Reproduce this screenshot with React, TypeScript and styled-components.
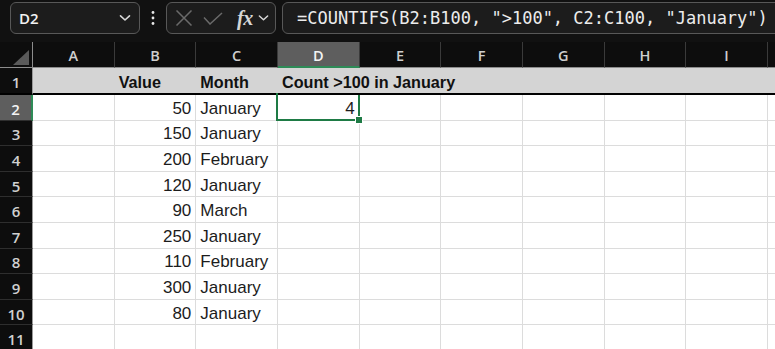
import React from 'react';
import styled, { createGlobalStyle, css } from 'styled-components';

const GlobalStyle = createGlobalStyle`
  html, body { margin: 0; padding: 0; background: #ffffff; }
  body { font-family: "Liberation Sans", Arial, sans-serif; }
  #root { width: 775px; height: 349px; }
`;

const Frame = styled.div`
  width: 775px;
  height: 349px;
  overflow: hidden;
  background: #ffffff;
  display: flex;
  flex-direction: column;
`;

const Toolbar = styled.div`
  flex: none;
  height: 42px;
  box-sizing: border-box;
  background: #111111;
  display: flex;
  align-items: flex-start;
  padding: 2px 0 0 10px;
`;

const Box = styled.div<{ $width?: number; $grow?: boolean }>`
  box-sizing: border-box;
  height: 32px;
  border: 1px solid #585858;
  border-radius: 6px;
  background: #1c1c1c;
  display: flex;
  align-items: center;
  ${(p) => (p.$width ? `width: ${p.$width}px; flex: none;` : '')}
  ${(p) => (p.$grow ? 'flex: 1; margin-right: -12px;' : '')}
`;

const NameText = styled.span`
  flex: 1;
  padding-left: 8px;
  color: #f2f2f2;
  font-family: "Open Sans", "Noto Sans", sans-serif;
  font-weight: 600;
  font-size: 15px;
`;

const IconSlot = styled.span<{ $ml?: number; $mr?: number }>`
  display: inline-flex;
  align-items: center;
  margin-left: ${(p) => p.$ml ?? 0}px;
  margin-right: ${(p) => p.$mr ?? 0}px;
`;

const DotsWrap = styled.div`
  width: 26px;
  height: 32px;
  flex: none;
  display: flex;
  align-items: center;
  justify-content: center;
`;

const FormulaText = styled.span`
  padding-left: 14px;
  color: #ececec;
  font-family: "DejaVu Sans Mono", "Liberation Mono", monospace;
  font-size: 17px;
  white-space: nowrap;
`;

const Sheet = styled.div`
  flex: 1;
  display: grid;
  grid-template-columns: 33px repeat(9, 81.67px) 1fr;
  grid-template-rows: 26px 27px repeat(10, 25.6px);
  overflow: hidden;
`;

const ColHead = styled.div<{ $active?: boolean }>`
  box-sizing: border-box;
  background: #0d0d0d;
  color: #cfcfcf;
  border-right: 1px solid #3a3a3a;
  border-bottom: 1px solid #8c8c8c;
  display: flex;
  align-items: center;
  justify-content: center;
  padding-top: 2px;
  font-family: "Open Sans", "Noto Sans", sans-serif;
  font-weight: 600;
  font-size: 14.5px;
  ${(p) =>
    p.$active &&
    css`
      background: #5e5e5e;
      color: #f4f4f4;
      border-bottom: 2px solid #2e8b57;
    `}
`;

const Corner = styled.div`
  box-sizing: border-box;
  background: #0d0d0d;
  border-right: 1px solid #8c8c8c;
  border-bottom: 1px solid #8c8c8c;
  display: flex;
  align-items: flex-end;
  justify-content: flex-end;
  padding: 0 3px 2px 0;
`;

const RowHead = styled.div<{ $active?: boolean; $thick?: boolean }>`
  box-sizing: border-box;
  background: #0d0d0d;
  color: #d0d0d0;
  border-right: 1px solid #9a9a9a;
  border-bottom: ${(p) => (p.$thick ? '2px solid #000' : '1px solid #2e2e2e')};
  display: flex;
  align-items: center;
  justify-content: center;
  padding-top: 3px;
  font-family: "Open Sans", "Noto Sans", sans-serif;
  font-weight: 600;
  font-size: 15px;
  line-height: 18px;
  ${(p) =>
    p.$active &&
    css`
      background: #5e5e5e;
      color: #f4f4f4;
      border-right: 2px solid #2e8b57;
    `}
`;

const Cell = styled.div<{ $align?: 'left' | 'right'; $header?: boolean; $active?: boolean; $front?: boolean }>`
  position: relative;
  box-sizing: border-box;
  border-right: 1px solid #dcdcdc;
  border-bottom: 1px solid #dcdcdc;
  background: #ffffff;
  color: #1c1c1c;
  display: flex;
  align-items: center;
  justify-content: ${(p) => (p.$align === 'right' ? 'flex-end' : 'flex-start')};
  padding: 3px 4px 0 4px;
  font-family: "Liberation Sans", Arial, sans-serif;
  font-size: 17px;
  line-height: 20px;
  white-space: nowrap;
  ${(p) => p.$front && 'z-index: 1;'}
  ${(p) =>
    p.$header &&
    css`
      background: #d4d4d4;
      border-right: none;
      border-bottom: 2px solid #000000;
      font-weight: 700;
      font-size: 16.2px;
      color: #111111;
      padding-top: 2px;
    `}
  ${(p) =>
    p.$active &&
    css`
      &::after {
        content: '';
        position: absolute;
        left: -2px;
        top: -2px;
        right: -1px;
        bottom: -1px;
        border: 2px solid #1e7b45;
        pointer-events: none;
      }
    `}
`;

const FillHandle = styled.span`
  position: absolute;
  right: -4px;
  bottom: -4px;
  width: 6px;
  height: 6px;
  background: #1e7b45;
  border: 1px solid #ffffff;
  z-index: 2;
`;

const Chevron = ({ color = '#d8d8d8', w = 12 }: { color?: string; w?: number }) => (
  <svg width={w} height={8} viewBox="0 0 12 8">
    <path d="M1.5 1.8 L6 6 L10.5 1.8" fill="none" stroke={color} strokeWidth="1.6" strokeLinecap="round" strokeLinejoin="round" />
  </svg>
);

const Dots = () => (
  <svg width="4" height="16" viewBox="0 0 4 16">
    <circle cx="2" cy="2.5" r="1.4" fill="#e8e8e8" />
    <circle cx="2" cy="8" r="1.4" fill="#e8e8e8" />
    <circle cx="2" cy="13.5" r="1.4" fill="#e8e8e8" />
  </svg>
);

const CrossIcon = () => (
  <svg width="18" height="16" viewBox="0 0 18 16">
    <path d="M1.5 0.5 L16.5 15.5 M16.5 0.5 L1.5 15.5" stroke="#6a6a6a" strokeWidth="1.5" fill="none" />
  </svg>
);

const CheckIcon = () => (
  <svg width="20" height="13" viewBox="0 0 20 13">
    <path d="M1 5.5 L7 12 L19 1" stroke="#6a6a6a" strokeWidth="1.5" fill="none" />
  </svg>
);

const FxText = styled.span`
  font-family: "Liberation Serif", "Times New Roman", serif;
  font-style: italic;
  font-weight: 700;
  font-size: 20px;
  color: #d6d6d6;
  line-height: 1;
  letter-spacing: -0.5px;
`;

const CornerTriangle = () => (
  <svg width="16" height="15" viewBox="0 0 16 15">
    <path d="M16 0 L16 15 L0 15 Z" fill="#5a5a5a" />
  </svg>
);

const cols = ['A', 'B', 'C', 'D', 'E', 'F', 'G', 'H', 'I', ''];

const values = ['50', '150', '200', '120', '90', '250', '110', '300', '80'];
const months = ['January', 'January', 'February', 'January', 'March', 'January', 'February', 'January', 'January'];

const headerText: Record<string, string> = {
  B: 'Value',
  C: 'Month',
  D: 'Count >100 in January',
};

export default function App() {
  const rows: React.ReactNode[] = [];
  for (let r = 2; r <= 11; r++) {
    const i = r - 2;
    rows.push(
      <RowHead key={`rh${r}`} $active={r === 2}>
        {r}
      </RowHead>
    );
    cols.forEach((c) => {
      let content: React.ReactNode = null;
      let align: 'left' | 'right' = 'left';
      if (c === 'B' && values[i]) {
        content = values[i];
        align = 'right';
      }
      if (c === 'C' && months[i]) content = months[i];
      const active = c === 'D' && r === 2;
      if (active) {
        content = '4';
        align = 'right';
      }
      rows.push(
        <Cell key={`${c}${r}`} $align={align} $active={active}>
          {content}
          {active && <FillHandle />}
        </Cell>
      );
    });
  }

  return (
    <Frame>
      <GlobalStyle />
      <Toolbar>
        <Box $width={130}>
          <NameText>D2</NameText>
          <IconSlot $mr={8}>
            <Chevron />
          </IconSlot>
        </Box>
        <DotsWrap>
          <Dots />
        </DotsWrap>
        <Box $width={110}>
          <IconSlot $ml={8}>
            <CrossIcon />
          </IconSlot>
          <IconSlot $ml={10}>
            <CheckIcon />
          </IconSlot>
          <IconSlot $ml={14}>
            <FxText>fx</FxText>
          </IconSlot>
          <IconSlot $ml={5}>
            <Chevron w={11} />
          </IconSlot>
        </Box>
        <Box $grow style={{ marginLeft: 6 }}>
          <FormulaText>=COUNTIFS(B2:B100, "&gt;100", C2:C100, "January")</FormulaText>
        </Box>
      </Toolbar>
      <Sheet>
        <Corner>
          <CornerTriangle />
        </Corner>
        {cols.map((c) => (
          <ColHead key={`ch${c}`} $active={c === 'D'}>
            {c}
          </ColHead>
        ))}
        <RowHead $thick>1</RowHead>
        {cols.map((c) => (
          <Cell key={`${c}1`} $header $front={c === 'D'}>
            {headerText[c] ?? null}
          </Cell>
        ))}
        {rows}
      </Sheet>
    </Frame>
  );
}
